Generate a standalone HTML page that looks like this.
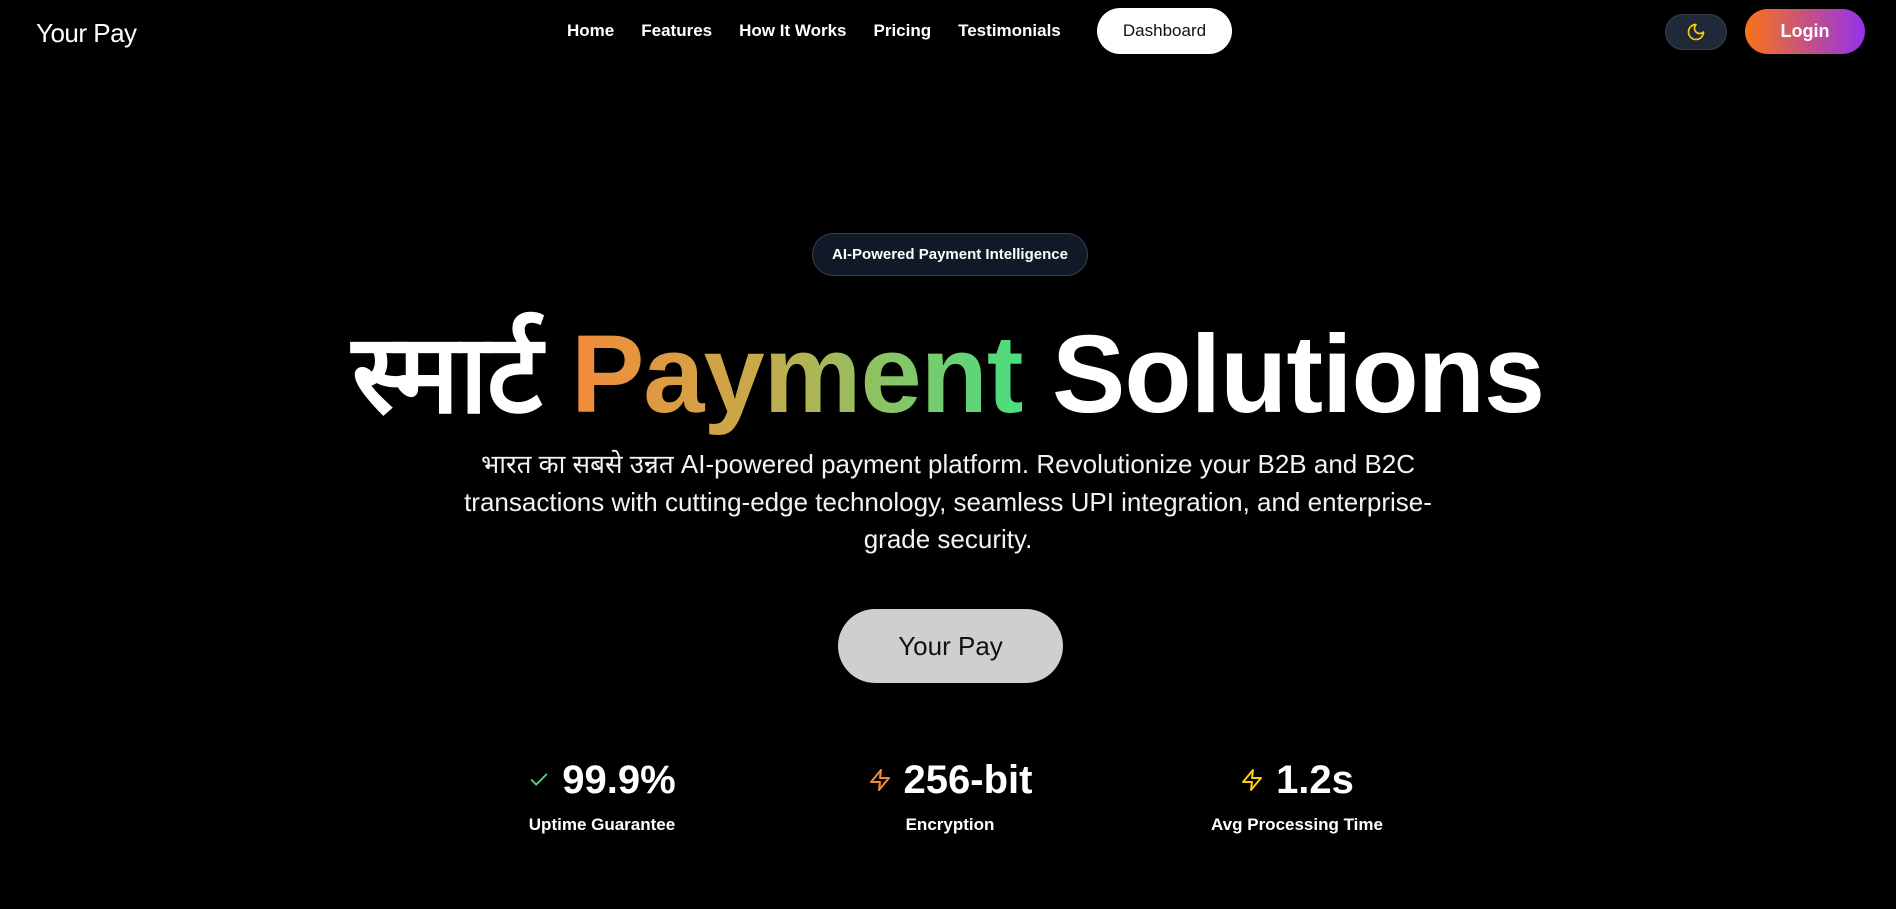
<!DOCTYPE html>
<html><head><meta charset="utf-8"><style>
*{margin:0;padding:0;box-sizing:border-box}
body{width:1896px;height:909px;background:#000;color:#fff;font-family:"Liberation Sans","Noto Sans CJK SC",sans-serif;position:relative;overflow:hidden}
.abs{position:absolute}
.logo{left:36px;top:18px;font-size:26px;letter-spacing:-0.5px}
.nav{top:21px;left:567px;display:flex;gap:27px;font-size:17px;font-weight:bold}
.dash{left:1097px;top:8px;width:135px;height:46px;border-radius:23px;background:#fff;color:#111;font-size:17px;display:flex;align-items:center;justify-content:center}
.tog{left:1665px;top:14px;width:62px;height:36px;border-radius:18px;background:#1f2937;border:1px solid #374151;display:flex;align-items:center;justify-content:center}
.login{left:1745px;top:9px;width:120px;height:45px;border-radius:23px;background:linear-gradient(90deg,#f97316,#9333ea);font-size:18px;font-weight:bold;display:flex;align-items:center;justify-content:center}
.badge{left:812px;top:233px;width:276px;height:43px;border-radius:22px;background:#111827;border:1px solid #374151;font-size:15px;font-weight:bold;display:flex;align-items:center;justify-content:center}
.h1{left:0;width:1896px;top:310px;text-align:center;font-size:110px;font-weight:bold;line-height:130px;letter-spacing:-1px}
.grad{background:linear-gradient(90deg,#f28b38,#c9a94a 40%,#4ade80);-webkit-background-clip:text;background-clip:text;color:transparent}
.p{left:440px;width:1016px;top:446px;text-align:center;font-size:26px;line-height:37.5px;color:#f3f3f3}
.btn{left:838px;top:609px;width:225px;height:74px;border-radius:37px;background:#cfcfcf;color:#111;font-size:26px;display:flex;align-items:center;justify-content:center}
.stat{top:755px;width:300px;text-align:center}
.num{font-size:40px;font-weight:bold;display:flex;align-items:center;justify-content:center;gap:12px;height:50px}
.lbl{font-size:17px;font-weight:bold;margin-top:10px}
</style></head><body>
<div class="abs logo">Your Pay</div>
<div class="abs nav"><span>Home</span><span>Features</span><span>How It Works</span><span>Pricing</span><span>Testimonials</span></div>
<div class="abs dash">Dashboard</div>
<div class="abs tog"><svg width="20" height="20" viewBox="0 0 24 24" fill="none" stroke="#facc15" stroke-width="2" stroke-linecap="round" stroke-linejoin="round"><path d="M12 3a6 6 0 0 0 9 9 9 9 0 1 1-9-9Z"/></svg></div>
<div class="abs login">Login</div>
<div class="abs badge">AI-Powered Payment Intelligence</div>
<div class="abs h1">स्मार्ट <span class="grad">Payment</span> Solutions</div>
<div class="abs p">भारत का सबसे उन्नत AI-powered payment platform. Revolutionize your B2B and B2C transactions with cutting-edge technology, seamless UPI integration, and enterprise-grade security.</div>
<div class="abs btn">Your Pay</div>
<div class="abs stat" style="left:452px"><div class="num"><svg width="22" height="22" viewBox="0 0 24 24" fill="none" stroke="#4ade80" stroke-width="2" stroke-linecap="round" stroke-linejoin="round"><path d="M20 6 9 17l-5-5"/></svg>99.9%</div><div class="lbl">Uptime Guarantee</div></div>
<div class="abs stat" style="left:800px"><div class="num"><svg width="24" height="26" viewBox="0 0 24 24" fill="none" stroke="#f28b38" stroke-width="2" stroke-linecap="round" stroke-linejoin="round"><path d="M13 2 3 14h9l-1 8 10-12h-9l1-8z"/></svg>256-bit</div><div class="lbl">Encryption</div></div>
<div class="abs stat" style="left:1147px"><div class="num"><svg width="24" height="26" viewBox="0 0 24 24" fill="none" stroke="#facc15" stroke-width="2" stroke-linecap="round" stroke-linejoin="round"><path d="M13 2 3 14h9l-1 8 10-12h-9l1-8z"/></svg>1.2s</div><div class="lbl">Avg Processing Time</div></div>
</body></html>
